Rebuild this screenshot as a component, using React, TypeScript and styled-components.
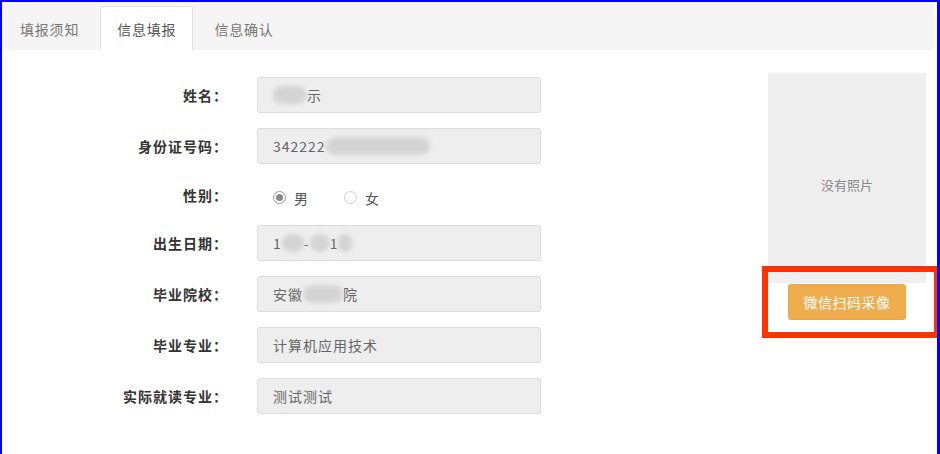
import React from "react";
import styled, { createGlobalStyle } from "styled-components";

const Global = createGlobalStyle`
  html, body { margin: 0; padding: 0; background: #fff; }
  body { font-family: "Noto Sans CJK SC", "Noto Sans", sans-serif; }
  * { box-sizing: border-box; }
`;

const Frame = styled.div`
  width: 940px;
  height: 454px;
  border: solid #0000ff;
  border-width: 2px 3px 0 2px;
  position: relative;
  overflow: hidden;
`;

const TabBar = styled.div`
  display: flex;
  align-items: flex-end;
  height: 48px;
  width: 932px;
  background: #f5f5f5;
  padding-left: 1px;
`;

const Tab = styled.div<{ $active?: boolean }>`
  height: 44px;
  padding: 0 16px;
  margin-right: 4px;
  display: flex;
  align-items: center;
  font-size: 14px;
  letter-spacing: 0.8px;
  color: ${(p) => (p.$active ? "#555" : "#777")};
  background: ${(p) => (p.$active ? "#fff" : "transparent")};
  border: 1px solid ${(p) => (p.$active ? "#e3e3e3" : "transparent")};
  border-bottom: none;
  border-radius: 2px 2px 0 0;
`;

const Body = styled.div`
  display: flex;
  padding-top: 27px;
`;

const Form = styled.div`
  display: flex;
  flex-direction: column;
  gap: 15px;
`;

const Row = styled.div<{ $h?: number }>`
  display: flex;
  align-items: center;
  height: ${(p) => p.$h ?? 36}px;
`;

const Label = styled.div`
  width: 226px;
  text-align: right;
  font-size: 14px;
  font-weight: bold;
  color: #333;
  letter-spacing: 1px;
  margin-right: 29px;
`;

const Input = styled.div`
  width: 284px;
  height: 36px;
  background: #eeeeee;
  border: 1px solid #dcdcdc;
  border-radius: 3px;
  display: flex;
  align-items: center;
  padding-left: 15px;
  font-size: 14px;
  color: #666;
  letter-spacing: 1px;
`;

const Blur = styled.span<{ $w: number }>`
  display: inline-block;
  width: ${(p) => p.$w}px;
  height: 18px;
  background: #d4d4d4;
  border-radius: 9px;
  filter: blur(2px);
  vertical-align: middle;
`;

const Radios = styled.div`
  display: flex;
  align-items: center;
  padding-left: 16px;
  padding-top: 6px;
  font-size: 14px;
  color: #555;
`;

const RadioItem = styled.label`
  display: flex;
  align-items: center;
  gap: 8px;
  margin-right: 36px;
`;

const Circle = styled.span<{ $checked?: boolean }>`
  width: 13px;
  height: 13px;
  border-radius: 50%;
  border: 1px solid ${(p) => (p.$checked ? "#9a9a9a" : "#d0d0d0")};
  background: #fff;
  display: flex;
  align-items: center;
  justify-content: center;
  &::after {
    content: "";
    width: 7px;
    height: 7px;
    border-radius: 50%;
    background: ${(p) => (p.$checked ? "#888" : "transparent")};
  }
`;

const Side = styled.div`
  margin-left: auto;
  margin-right: 11px;
  margin-top: -4px;
  width: 158px;
  display: flex;
  flex-direction: column;
  align-items: center;
`;

const Photo = styled.div`
  width: 158px;
  height: 210px;
  background: #efefef;
  display: flex;
  align-items: center;
  justify-content: center;
  padding-top: 12px;
  font-size: 13px;
  color: #888;
`;

const Button = styled.button`
  margin-top: 1px;
  width: 118px;
  height: 36px;
  background: #f0ad4e;
  border: 1px solid #eea641;
  border-radius: 3px;
  color: #fff;
  font-family: "Noto Sans CJK SC", sans-serif;
  font-size: 14px;
  letter-spacing: 0.5px;
`;

const Highlight = styled.div`
  position: absolute;
  left: 760px;
  top: 264px;
  width: 178px;
  height: 72px;
  border: 6px solid #ff3300;
  pointer-events: none;
`;

const fields: { label: string; value: React.ReactNode }[] = [
  { label: "姓名：", value: <><Blur $w={34} /> 示</> },
  { label: "身份证号码：", value: <>342222<Blur $w={104} /></> },
];

const fields2: { label: string; value: React.ReactNode }[] = [
  { label: "出生日期：", value: <>1<Blur $w={22} />-<Blur $w={20} />1<Blur $w={14} /></> },
  { label: "毕业院校：", value: <>安徽<Blur $w={40} />院</> },
  { label: "毕业专业：", value: "计算机应用技术" },
  { label: "实际就读专业：", value: "测试测试" },
];

export default function App() {
  return (
    <>
      <Global />
      <Frame>
        <TabBar>
          <Tab>填报须知</Tab>
          <Tab $active>信息填报</Tab>
          <Tab>信息确认</Tab>
        </TabBar>
        <Body>
          <Form>
            {fields.map((f) => (
              <Row key={f.label}>
                <Label>{f.label}</Label>
                <Input>{f.value}</Input>
              </Row>
            ))}
            <Row $h={31}>
              <Label>性别：</Label>
              <Radios>
                <RadioItem>
                  <Circle $checked />男
                </RadioItem>
                <RadioItem>
                  <Circle />女
                </RadioItem>
              </Radios>
            </Row>
            {fields2.map((f) => (
              <Row key={f.label}>
                <Label>{f.label}</Label>
                <Input>{f.value}</Input>
              </Row>
            ))}
          </Form>
          <Side>
            <Photo>没有照片</Photo>
            <Button>微信扫码采像</Button>
          </Side>
        </Body>
        <Highlight />
      </Frame>
    </>
  );
}
